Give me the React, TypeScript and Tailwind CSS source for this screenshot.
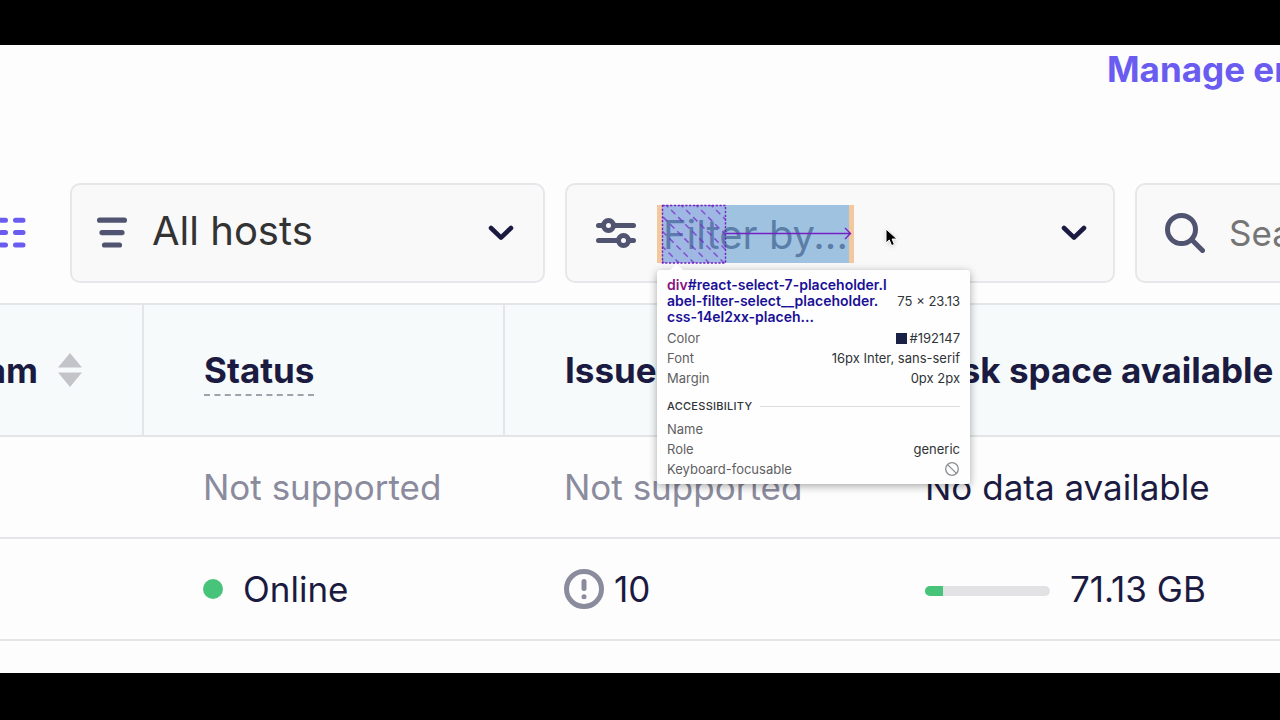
import React from "react";

const rows = [
  { id: 1, status: null, issues: null, disk: null },
  { id: 2, status: "Online", issues: 10, disk: { label: "71.13 GB", percent: 14 } },
];

function ChevronDown() {
  return (
    <svg aria-hidden="true" className="pointer-events-none h-4 w-[26px] shrink-0" viewBox="0 0 26 16" fill="none">
      <path d="M3 3l10 9.600L23 3" stroke="#1b1b42" strokeWidth="4.600" strokeLinecap="round" strokeLinejoin="round" />
    </svg>
  );
}

function ListIcon() {
  return (
    <svg aria-hidden="true" className="h-8 w-8 shrink-0" viewBox="0 0 32 32" fill="none" stroke="#515470" strokeWidth="5.200" strokeLinecap="round">
      <path d="M3.600 3.200h24.800M6 15.600h20M8.500 28h15" />
    </svg>
  );
}

function SlidersIcon() {
  return (
    <svg aria-hidden="true" className="h-8 w-10 shrink-0" viewBox="0 0 40 32" fill="none" stroke="#515470" strokeWidth="5" strokeLinecap="round">
      <path d="M2.500 8.500h3M18 8.500h19.500M2.500 23.500h19M33 23.500h4.500" />
      <circle cx="12.500" cy="8.500" r="5" />
      <circle cx="27.500" cy="23.500" r="5" />
    </svg>
  );
}

function SearchIcon() {
  return (
    <svg aria-hidden="true" className="h-10 w-10 shrink-0" viewBox="0 0 40 40" fill="none" stroke="#515470" strokeWidth="5" strokeLinecap="round">
      <circle cx="16.500" cy="16.500" r="14" />
      <path d="M27 27l10.500 10.500" />
    </svg>
  );
}

function ColumnsIcon() {
  return (
    <svg aria-hidden="true" className="h-8 w-10 shrink-0" viewBox="0 0 40 32" stroke="#6a5cf0" strokeWidth="5" strokeLinecap="round">
      <path d="M1.500 3.200h4M1.500 15.600h4M1.500 28h4M15 3.200h4.500M15 15.600h4.500M15 28h4.500M29.500 3.200h7.500M29.500 15.600h7.500M29.500 28h7.500" />
    </svg>
  );
}

function SortIcon() {
  return (
    <svg aria-hidden="true" className="h-9 w-6 shrink-0" viewBox="0 0 24 36" fill="#c3c4ca">
      <path d="M12 1l12 14.500H0zM12 35l12-14.500H0z" />
    </svg>
  );
}

function IssueIcon() {
  return (
    <svg aria-hidden="true" className="h-10 w-10 shrink-0" viewBox="0 0 40 40" fill="none" stroke="#8b8b9e">
      <circle cx="20" cy="20" r="17.500" strokeWidth="5" />
      <path d="M20 12.600v7" strokeWidth="5" strokeLinecap="round" />
      <circle cx="20" cy="27.800" r="2.500" fill="#8b8b9e" stroke="none" />
    </svg>
  );
}

function InspectOverlay() {
  return (
    <div className="pointer-events-none absolute top-[20px] left-[90px] h-[58px] w-[197px]">
      <div className="h-full border-x-[5px] border-[#f0ae70]/66 bg-[#72a6d4]/66 bg-clip-padding" />
      <svg aria-hidden="true" className="absolute inset-0 h-full w-full overflow-visible" viewBox="0 0 197 58" fill="none" stroke="#7420c4">
        <defs>
          <clipPath id="free-space">
            <rect x="5" y="0" width="64" height="58" />
          </clipPath>
        </defs>
        <g clipPath="url(#free-space)" strokeDasharray="6 4" strokeWidth="1.500" opacity="0.7">
          <path d="M-53 -2l62 62M-38 -2l62 62M-23 -2l62 62M-8 -2l62 62M7 -2l62 62M22 -2l62 62M37 -2l62 62M52 -2l62 62" />
        </g>
        <rect x="5.500" y="0.500" width="63" height="57.500" strokeDasharray="2.200 1.600" strokeWidth="1.400" fill="#8a4bff" fillOpacity="0.08" />
        <path d="M69 28.500h124M188 23l5.500 5.500L188 34" strokeWidth="1.400" />
      </svg>
    </div>
  );
}

function TipRow({ label, children }: { label: string; children?: React.ReactNode }) {
  return (
    <div className="flex h-5 items-center justify-between">
      <dt className="text-[#5f6063]">{label}</dt>
      <dd className="flex items-center text-[#303438]">{children}</dd>
    </div>
  );
}

function InspectTooltip() {
  return (
    <div
      role="tooltip"
      className="absolute top-[85px] left-[90px] z-10 w-[313px] rounded-[3px] bg-[#fefefe] px-[10px] pt-[7px] pb-[5px] text-[13px] leading-5 shadow-[0_2px_8px_rgba(0,0,0,0.35)]"
    >
      <svg aria-hidden="true" className="absolute -top-[7px] left-3 h-2 w-4" viewBox="0 0 16 8" fill="#fefefe">
        <path d="M0 8L7.500 0.500L15 8z" />
      </svg>
      <div className="flex items-center justify-between">
        <p className="text-[14px] leading-4 font-semibold whitespace-nowrap text-[#1a1096]">
          <span className="text-[#881280]">div</span>#react-select-7-placeholder.l
          <br />
          abel-filter-select__placeholder.
          <br />
          css-14el2xx-placeh...
        </p>
        <span className="whitespace-nowrap text-[#303438]">75 × 23.13</span>
      </div>
      <dl className="pt-[3px]">
        <TipRow label="Color">
          <span className="mr-[2px] h-[11px] w-[11px] bg-[#192147]" />
          #192147
        </TipRow>
        <TipRow label="Font">16px Inter, sans-serif</TipRow>
        <TipRow label="Margin">0px 2px</TipRow>
      </dl>
      <div className="flex items-center gap-2 pt-2 pb-[3px]">
        <h2 className="text-[11px] leading-5 font-medium tracking-wide text-[#303438]">ACCESSIBILITY</h2>
        <span className="h-px flex-1 bg-[#dddddd]" />
      </div>
      <dl>
        <TipRow label="Name" />
        <TipRow label="Role">generic</TipRow>
        <TipRow label="Keyboard-focusable">
          <svg aria-label="No" className="h-4 w-4" viewBox="0 0 16 16" fill="none" stroke="#8a8d91" strokeWidth="1.300">
            <circle cx="8" cy="8" r="6.300" />
            <path d="M3.600 3.600l8.800 8.800" />
          </svg>
        </TipRow>
      </dl>
    </div>
  );
}

function Pointer() {
  return (
    <svg aria-hidden="true" className="pointer-events-none absolute top-[43px] left-[318px] h-[19px] w-[13px] drop-shadow-sm" viewBox="0 0 13 19">
      <path d="M1 1v14l3.300-3 2.300 5.600 2.800-1.200L7.100 11H12z" fill="#000" stroke="#fff" strokeWidth="1" />
    </svg>
  );
}

function StatusCell({ status }: { status: string | null }) {
  if (!status) return <span className="text-[#8b8b9e]">Not supported</span>;
  return (
    <span className="flex items-center gap-5">
      <span className="h-5 w-5 rounded-full bg-[#48c47a]" />
      {status}
    </span>
  );
}

export default function App() {
  return (
    <div className="flex min-h-screen flex-col overflow-hidden bg-black pt-[45px] pb-[47px] font-['Inter','Liberation_Sans',sans-serif] text-[#1b1b42]">
      <main className="flex-1 overflow-hidden bg-[#fdfdfd]">
        <header className="flex h-[138px] items-start pl-[1107px]">
          <a href="#enroll" className="text-[35px] leading-[48px] font-bold whitespace-nowrap text-[#6a5cf0]">
            Manage enroll secret
          </a>
        </header>

        <div className="flex h-[100px] items-center gap-5">
          <button type="button" aria-label="Edit columns" className="mr-6 flex w-[26px] shrink-0 justify-end">
            <ColumnsIcon />
          </button>

          <div className="flex h-full w-[475px] shrink-0 items-center rounded-[10px] border-2 border-[#e6e7ea] bg-[#f9f9f9] pr-[29px] pl-6">
            <ListIcon />
            <select aria-label="Host status" className="ml-6 min-w-0 flex-1 appearance-none bg-transparent pb-1 text-[40px] leading-[48px] text-[#333333]">
              <option>All hosts</option>
            </select>
            <ChevronDown />
          </div>

          <div className="relative flex h-full w-[550px] shrink-0 items-center rounded-[10px] border-2 border-[#e6e7ea] bg-[#f9f9f9] pr-[26px] pl-[29px]">
            <SlidersIcon />
            <select aria-label="Filter by label" className="ml-[27px] min-w-0 flex-1 appearance-none bg-transparent pt-1 text-[40px] leading-[48px] text-[#2c3350]">
              <option>Filter by...</option>
            </select>
            <ChevronDown />
            <InspectOverlay />
            <Pointer />
            <InspectTooltip />
          </div>

          <label className="flex h-full w-[420px] shrink-0 items-center gap-6 rounded-[10px] border-2 border-[#e6e7ea] bg-[#f9f9f9] pl-7">
            <SearchIcon />
            <input
              type="search"
              aria-label="Search hosts"
              placeholder="Search name"
              className="min-w-0 flex-1 bg-transparent text-[35px] leading-[48px] placeholder:text-[#757575]"
            />
          </label>
        </div>

        <table className="mt-5 w-full table-fixed border-collapse text-left text-[35px] leading-[48px] whitespace-nowrap">
          <colgroup>
            <col className="w-[143px]" />
            <col className="w-[361px]" />
            <col className="w-[361px]" />
            <col />
          </colgroup>
          <thead>
            <tr className="h-[132px] border-y-2 border-[#e4e5e8] bg-[#f6fafb]">
              <th scope="col" className="overflow-hidden border-r-2 border-[#e4e5e8] pr-[60px]">
                <span className="flex items-center justify-end gap-5">
                  Team
                  <SortIcon />
                </span>
              </th>
              <th scope="col" className="border-r-2 border-[#e4e5e8] pt-[2px] pl-[60px]">
                <span className="inline-block border-b-2 border-dashed border-[#a0a2ab]">Status</span>
              </th>
              <th scope="col" className="border-r-2 border-[#e4e5e8] pl-[60px]">Issues</th>
              <th scope="col" className="pl-[60px]">Disk space available</th>
            </tr>
          </thead>
          <tbody>
            {rows.map((row) => (
              <tr key={row.id} className="h-[102px] border-b-2 border-[#e4e5e8]">
                <td />
                <td className="pl-[60px]">
                  <StatusCell status={row.status} />
                </td>
                <td className="pl-[60px]">
                  {row.issues === null ? (
                    <span className="text-[#8b8b9e]">Not supported</span>
                  ) : (
                    <span className="flex items-center gap-[10px]">
                      <IssueIcon />
                      {row.issues}
                    </span>
                  )}
                </td>
                <td className="pl-[60px]">
                  {row.disk === null ? (
                    "No data available"
                  ) : (
                    <span className="flex items-center gap-5">
                      <span className="mt-1 h-[10px] w-[125px] overflow-hidden rounded-full bg-[#e2e2e5]">
                        <span className="block h-full bg-[#48c47a]" style={{ width: `${row.disk.percent}%` }} />
                      </span>
                      {row.disk.label}
                    </span>
                  )}
                </td>
              </tr>
            ))}
          </tbody>
        </table>
      </main>
    </div>
  );
}
